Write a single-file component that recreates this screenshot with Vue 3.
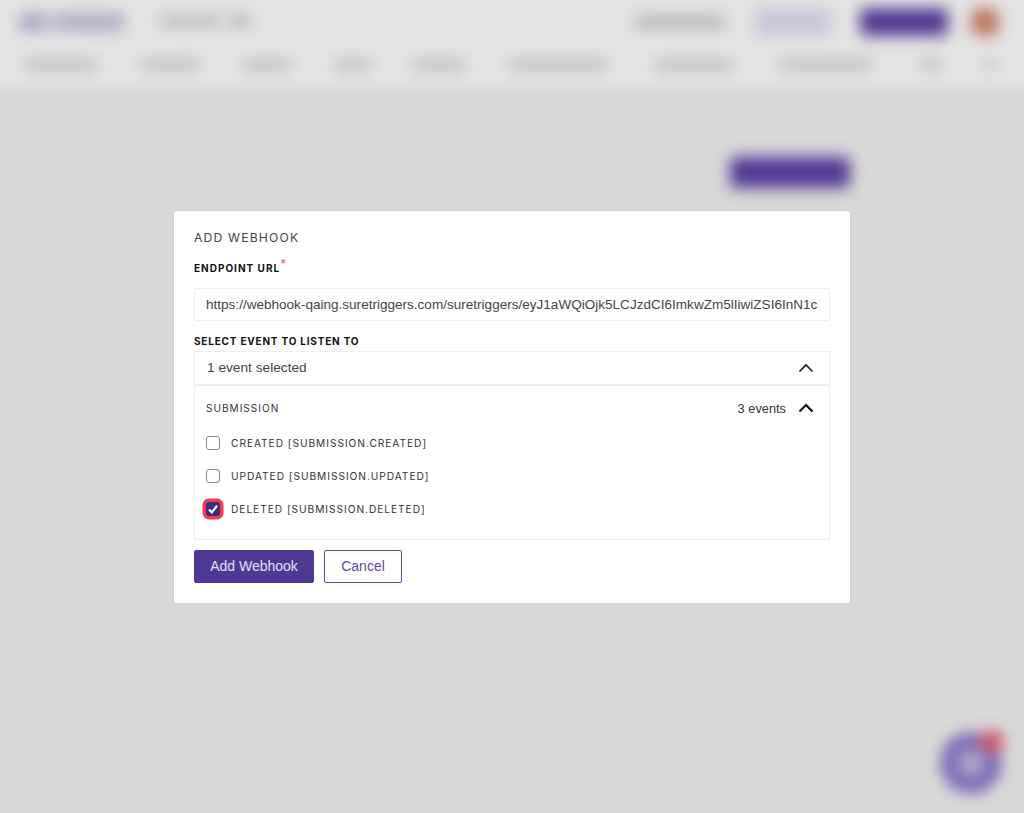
<template>
  <div class="screen">
    <!-- page behind the dialog, blurred out -->
    <div class="backdrop">
      <div class="top-head">
        <div class="head-row">
          <div class="logo"></div>
          <div class="workspace"></div>
          <div class="workspace-caret"></div>
          <div class="spacer"></div>
          <div class="head-link"></div>
          <div class="head-light"></div>
          <div class="head-primary"></div>
          <div class="avatar"></div>
        </div>
        <div class="nav-row">
          <div
            v-for="(item, index) in navItems"
            :key="index"
            class="nav-item"
            :style="{ width: item.w + 'px', marginRight: item.gap + 'px' }"
          ></div>
        </div>
      </div>
      <div class="page-actions">
        <div class="page-btn"></div>
      </div>
    </div>

    <div class="fab">
      <div class="fab-core"></div>
      <div class="fab-badge"></div>
    </div>

    <div class="overlay">
      <div class="modal">
        <h3 class="modal-title">ADD WEBHOOK</h3>
        <label class="field-label url-label">ENDPOINT URL<sup class="req">*</sup></label>
        <input class="url-input" type="text" readonly :value="endpoint" />

        <label class="field-label event-label">SELECT EVENT TO LISTEN TO</label>
        <div class="select-box">
          <span>1 event selected</span>
          <svg class="chev" width="16" height="10" viewBox="0 0 16 10">
            <path d="M1.5 8.5 8 2l6.5 6.5" fill="none" stroke="#222" stroke-width="1.7" />
          </svg>
        </div>

        <div class="event-panel">
          <div class="group-head">
            <span class="group-name">SUBMISSION</span>
            <span class="group-count">3 events</span>
            <svg class="chev" width="16" height="10" viewBox="0 0 16 10">
              <path d="M1.5 8.5 8 2l6.5 6.5" fill="none" stroke="#111" stroke-width="2.2" />
            </svg>
          </div>
          <div v-for="ev in events" :key="ev.label" class="event-row">
            <span :class="['check', { checked: ev.checked }]">
              <svg v-if="ev.checked" width="12" height="12" viewBox="0 0 12 12">
                <path d="M2 6.4 4.8 9.4 10 2.8" fill="none" stroke="#fff" stroke-width="2.2" />
              </svg>
            </span>
            <span class="event-name">{{ ev.label }}</span>
          </div>
        </div>

        <div class="actions">
          <button class="btn btn-primary">Add Webhook</button>
          <button class="btn btn-outline">Cancel</button>
        </div>
      </div>
    </div>
  </div>
</template>

<script setup>
const endpoint = 'https://webhook-qaing.suretriggers.com/suretriggers/eyJ1aWQiOjk5LCJzdCI6ImkwZm5lIiwiZSI6InN1c2NyaXB0aW9uIn0'

const navItems = [
  { w: 72, gap: 45 },
  { w: 58, gap: 43 },
  { w: 47, gap: 45 },
  { w: 35, gap: 43 },
  { w: 52, gap: 45 },
  { w: 98, gap: 47 },
  { w: 78, gap: 47 },
  { w: 92, gap: 48 },
  { w: 20, gap: 45 },
  { w: 10, gap: 0 }
]

const events = [
  { label: 'CREATED [SUBMISSION.CREATED]', checked: false },
  { label: 'UPDATED [SUBMISSION.UPDATED]', checked: false },
  { label: 'DELETED [SUBMISSION.DELETED]', checked: true }
]
</script>

<style>
html,
body {
  margin: 0;
  background: #d8d8d8;
}
</style>

<style scoped>
.screen {
  position: relative;
  width: 1024px;
  height: 813px;
  overflow: hidden;
  background: #d8d8d8;
  font-family: "Liberation Sans", Arial, sans-serif;
}

/* oversized so the blur doesn't fade out at the window edges */
.backdrop {
  position: absolute;
  inset: -20px;
  filter: blur(7.5px);
}

.top-head {
  background: #e4e4e4;
  height: 108px;
  box-sizing: border-box;
  padding: 20px 44px 0 40px;
}

.head-row {
  display: flex;
  align-items: center;
  height: 43px;
}

.logo {
  width: 104px;
  height: 18px;
  border-radius: 4px;
  background: linear-gradient(90deg, #a6a0c4 0 22px, #c2c0d2 22px 40px, #afabc6 40px);
  margin-right: 36px;
}

.workspace {
  width: 62px;
  height: 13px;
  background: #bebebe;
  margin-right: 8px;
}

.workspace-caret {
  width: 20px;
  height: 15px;
  background: #bcbcbc;
}

.spacer {
  flex: 1;
}

.head-link {
  width: 90px;
  height: 12px;
  background: #b2b2b2;
  margin-right: 30px;
}

.head-light {
  width: 76px;
  height: 28px;
  border-radius: 4px;
  background: #c8c6da;
  margin-right: 29px;
}

.head-primary {
  width: 88px;
  height: 28px;
  border-radius: 5px;
  background: #543a93;
  margin-right: 22px;
}

.avatar {
  width: 30px;
  height: 30px;
  border-radius: 50%;
  background: #bc7660;
}

.nav-row {
  display: flex;
  align-items: center;
  height: 42px;
  padding-left: 5px;
}

.nav-item {
  height: 11px;
  background: #bcbcbc;
  border-radius: 2px;
  flex-shrink: 0;
}

.page-actions {
  display: flex;
  justify-content: flex-end;
  padding: 69px 194px 0 0;
}

.page-btn {
  width: 120px;
  height: 31px;
  border-radius: 5px;
  background: #533895;
}

.fab {
  position: absolute;
  right: 22px;
  bottom: 19px;
  width: 62px;
  height: 62px;
  border-radius: 50%;
  background: #806db6;
  filter: blur(7px);
}

.fab-core {
  position: absolute;
  left: 18px;
  top: 18px;
  width: 26px;
  height: 26px;
  border-radius: 50%;
  background: #afa6cc;
}

.fab-badge {
  position: absolute;
  right: -2px;
  top: -2px;
  width: 24px;
  height: 24px;
  border-radius: 50%;
  background: #cc5a70;
}

.overlay {
  position: absolute;
  inset: 0;
  display: flex;
  align-items: center;
  justify-content: center;
}

.modal {
  width: 676px;
  height: 392px;
  box-sizing: border-box;
  background: #fff;
  border-radius: 2px;
  padding: 20px 20px 0;
  box-shadow: 0 0 2px rgba(0, 0, 0, 0.1);
}

.modal-title {
  margin: 0;
  font-family: "Inter", sans-serif;
  font-size: 12.2px;
  font-weight: 400;
  line-height: 14px;
  letter-spacing: 1.15px;
  color: #444;
}

.field-label {
  display: block;
  font-family: "Inter", sans-serif;
  font-size: 10px;
  font-weight: 700;
  line-height: 12px;
  letter-spacing: 1px;
  color: #111;
}

.url-label {
  margin-top: 17px;
  position: relative;
}

.req {
  position: absolute;
  top: -4px;
  font-size: 12px;
  line-height: 12px;
  font-weight: 400;
  color: #f0606c;
}

.url-input {
  display: block;
  width: 100%;
  height: 33px;
  box-sizing: border-box;
  margin-top: 14px;
  padding: 1px 12px 0 11px;
  border: 1px solid #efefef;
  border-radius: 2px;
  outline: none;
  background: #fff;
  font-family: "Liberation Sans", Arial, sans-serif;
  font-size: 13.55px;
  color: #444;
}

.event-label {
  margin-top: 14px;
  letter-spacing: 0.8px;
}

.select-box {
  display: flex;
  align-items: center;
  justify-content: space-between;
  height: 34px;
  box-sizing: border-box;
  margin-top: 4px;
  padding: 0 15px 0 12px;
  border: 1px solid #efefef;
  font-size: 13.7px;
  color: #444;
}

.event-panel {
  height: 155px;
  box-sizing: border-box;
  padding: 0 15px 0 11px;
  border: 1px solid #efefef;
  border-top: 1px solid #eaeaea;
}

.group-head {
  display: flex;
  align-items: center;
  height: 37px;
  padding-top: 4px;
}

.group-name {
  flex: 1;
  font-family: "Inter", sans-serif;
  font-size: 10px;
  letter-spacing: 1.05px;
  color: #333;
}

.group-count {
  font-size: 12.8px;
  color: #333;
  margin-right: 12px;
}

.event-row {
  display: flex;
  align-items: center;
  height: 33px;
}

.check {
  display: flex;
  align-items: center;
  justify-content: center;
  width: 14px;
  height: 14px;
  box-sizing: border-box;
  border: 1px solid #888;
  border-radius: 3px;
  margin-right: 11px;
  background: #fff;
}

.check.checked {
  background: #3c2d78;
  border-color: #3c2d78;
  box-shadow: 0 0 0 3.5px #f23a52;
}

.event-name {
  font-family: "Inter", sans-serif;
  font-size: 10.2px;
  letter-spacing: 0.95px;
  color: #333;
}

.actions {
  display: flex;
  gap: 10px;
  margin-top: 10px;
}

.btn {
  height: 33px;
  box-sizing: border-box;
  border-radius: 2px;
  font-family: "Liberation Sans", Arial, sans-serif;
  font-size: 14px;
  padding: 0;
  cursor: pointer;
}

.btn-primary {
  width: 120px;
  background: #4f3795;
  border: 1px solid #4f3795;
  color: #e4e0f0;
}

.btn-outline {
  width: 78px;
  background: #fff;
  border: 1px solid #5f48a8;
  color: #5f48a8;
}
</style>
